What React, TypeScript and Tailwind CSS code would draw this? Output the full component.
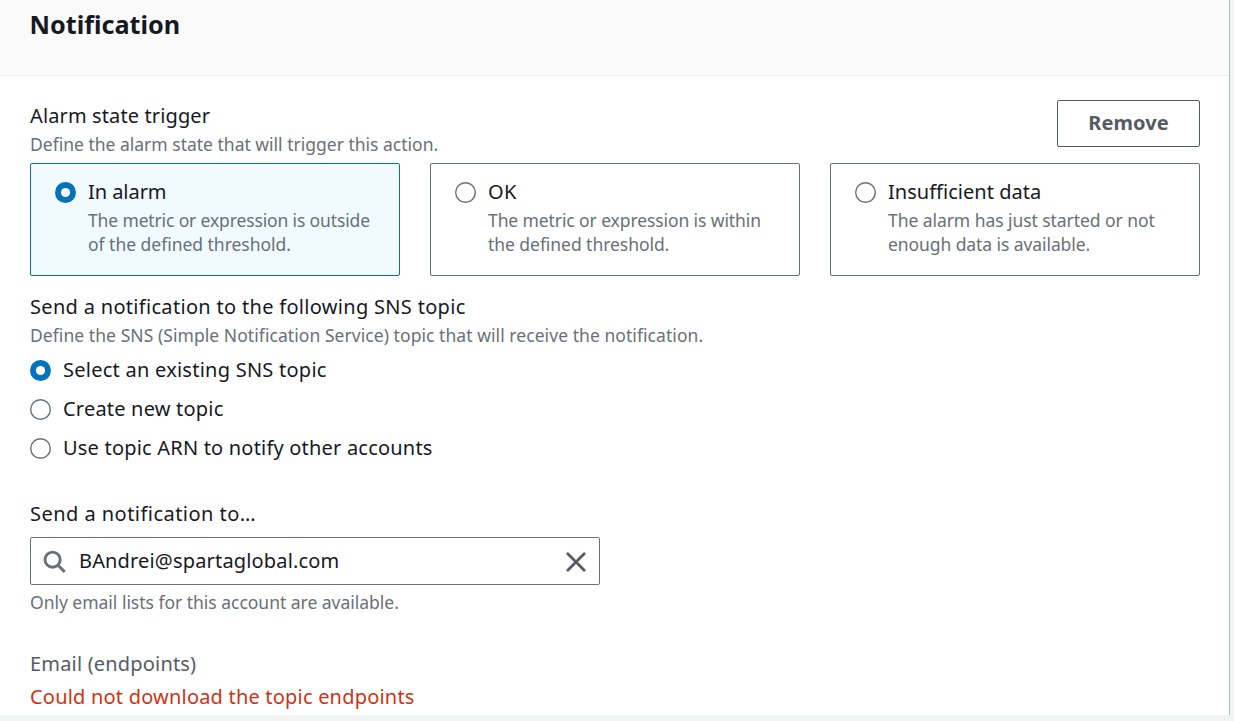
import type { ReactNode } from "react";

function Radio({ checked = false }: { checked?: boolean }) {
  return (
    <svg className="block h-[21px] w-[21px] shrink-0" viewBox="0 0 21 21" fill="none">
      {checked ? (
        <>
          <circle cx="10.5" cy="10.5" r="10.5" fill="#0073bb" />
          <circle cx="10.5" cy="10.5" r="4.6" fill="#ffffff" />
        </>
      ) : (
        <circle cx="10.5" cy="10.5" r="9.8" fill="#ffffff" stroke="#687078" strokeWidth="1.4" />
      )}
    </svg>
  );
}

function Line({ className, children }: { className: string; children: ReactNode }) {
  return <div className={`whitespace-nowrap ${className}`}>{children}</div>;
}

const LABEL = "text-[20px] leading-8";
const HINT = "text-[17.5px] leading-6 text-[#687078]";

interface TileProps {
  title: string;
  titleClass: string;
  lines: [string, string][];
  checked?: boolean;
}

function Tile({ title, titleClass, lines, checked = false }: TileProps) {
  return (
    <div
      className={`flex h-[113px] w-[370px] gap-3 rounded-[2px] border pt-3 pl-6 ${
        checked ? "border-[#0073bb] bg-[#f1faff]" : "border-[#687078] bg-white"
      }`}
    >
      <div className="pt-[6px]">
        <Radio checked={checked} />
      </div>
      <div>
        <Line className={`${LABEL} ${titleClass}`}>{title}</Line>
        <div className={HINT}>
          {lines.map(([text, tracking]) => (
            <Line key={text} className={tracking}>
              {text}
            </Line>
          ))}
        </div>
      </div>
    </div>
  );
}

function Option({ text, tracking, checked }: { text: string; tracking: string; checked?: boolean }) {
  return (
    <div className="flex h-8 gap-3">
      <div className="pt-[6px]">
        <Radio checked={checked} />
      </div>
      <Line className={`${LABEL} ${tracking}`}>{text}</Line>
    </div>
  );
}

export default function App() {
  return (
    <div className="h-[721px] w-[1234px] overflow-hidden bg-[#f2f3f3] font-['Noto_Sans',sans-serif] text-[#16191f]">
      <div className="h-[715px] w-[1230px] border-r border-[#b3bcbd] bg-white">
        <header className="h-[76px] border-b border-[#eaeded] bg-[#fafafa] pt-[9px] pl-[29.5px]">
          <h2 className="text-[25.2px] leading-[30px] font-bold">Notification</h2>
        </header>

        <main className="px-[30px] pt-6 pr-[29px]">
          <div className="flex h-[63px] justify-between">
            <div>
              <Line className={`${LABEL} tracking-[0.12px]`}>Alarm state trigger</Line>
              <Line className={HINT}>Define the alarm state that will trigger this action.</Line>
            </div>
            <button className="flex h-[47px] w-[143px] justify-center rounded-[2px] border border-[#545b64] pt-[7px] text-[20px] leading-[30px] font-bold tracking-[0.1px] text-[#545b64]">
              Remove
            </button>
          </div>

          <div className="flex justify-between">
            <Tile
              checked
              title="In alarm"
              titleClass="tracking-[-0.05px]"
              lines={[
                ["The metric or expression is outside", "tracking-[-0.14px]"],
                ["of the defined threshold.", "tracking-[-0.02px]"],
              ]}
            />
            <Tile
              title="OK"
              titleClass="tracking-[0.5px]"
              lines={[
                ["The metric or expression is within", "tracking-[-0.1px]"],
                ["the defined threshold.", "tracking-[-0.05px]"],
              ]}
            />
            <Tile
              title="Insufficient data"
              titleClass="tracking-[0.03px]"
              lines={[
                ["The alarm has just started or not", "tracking-[-0.06px]"],
                ["enough data is available.", "tracking-[-0.08px]"],
              ]}
            />
          </div>

          <div className="mt-[15px]">
            <Line className={`${LABEL} tracking-[0.31px]`}>
              Send a notification to the following SNS topic
            </Line>
            <Line className={`${HINT} tracking-[0.06px]`}>
              Define the SNS (Simple Notification Service) topic that will receive the notification.
            </Line>
          </div>

          <div className="mt-[7px] flex flex-col gap-[7px]">
            <Option checked text="Select an existing SNS topic" tracking="tracking-[0.25px]" />
            <Option text="Create new topic" tracking="tracking-[0.2px]" />
            <Option text="Use topic ARN to notify other accounts" tracking="tracking-[0.2px]" />
          </div>

          <div className="mt-[34px]">
            <Line className={`${LABEL} tracking-[0.46px]`}>Send a notification to…</Line>
            <div className="mt-[7px] flex h-12 w-[570px] items-start rounded-[2px] border border-[#687078] pt-[7px] pl-3">
              <svg className="mt-[5px] block h-6 w-6 shrink-0" viewBox="0 0 24 24" fill="none" stroke="#687078" strokeWidth="2.9">
                <circle cx="9.6" cy="9.7" r="7.6" />
                <path d="M15 15.2 L21.7 21.9" />
              </svg>
              <Line className={`ml-3 w-[486px] ${LABEL} tracking-[0.16px]`}>BAndrei@spartaglobal.com</Line>
              <svg
                className="mt-[6px] block h-[22px] w-[22px] shrink-0"
                viewBox="0 0 22 22"
                fill="none"
                stroke="#545b64"
                strokeWidth="2.8"
                strokeLinecap="round"
              >
                <path d="M2.8 2.8 L19.2 19.2 M19.2 2.8 L2.8 19.2" />
              </svg>
            </div>
            <Line className={`mt-[5px] ${HINT} tracking-[-0.02px]`}>
              Only email lists for this account are available.
            </Line>
          </div>

          <div className="mt-[34px]">
            <Line className={`${LABEL} tracking-[0.18px] text-[#545b64]`}>Email (endpoints)</Line>
            <Line className={`mt-px ${LABEL} tracking-[0.2px] text-[#d13212]`}>
              Could not download the topic endpoints
            </Line>
          </div>
        </main>
      </div>
    </div>
  );
}
